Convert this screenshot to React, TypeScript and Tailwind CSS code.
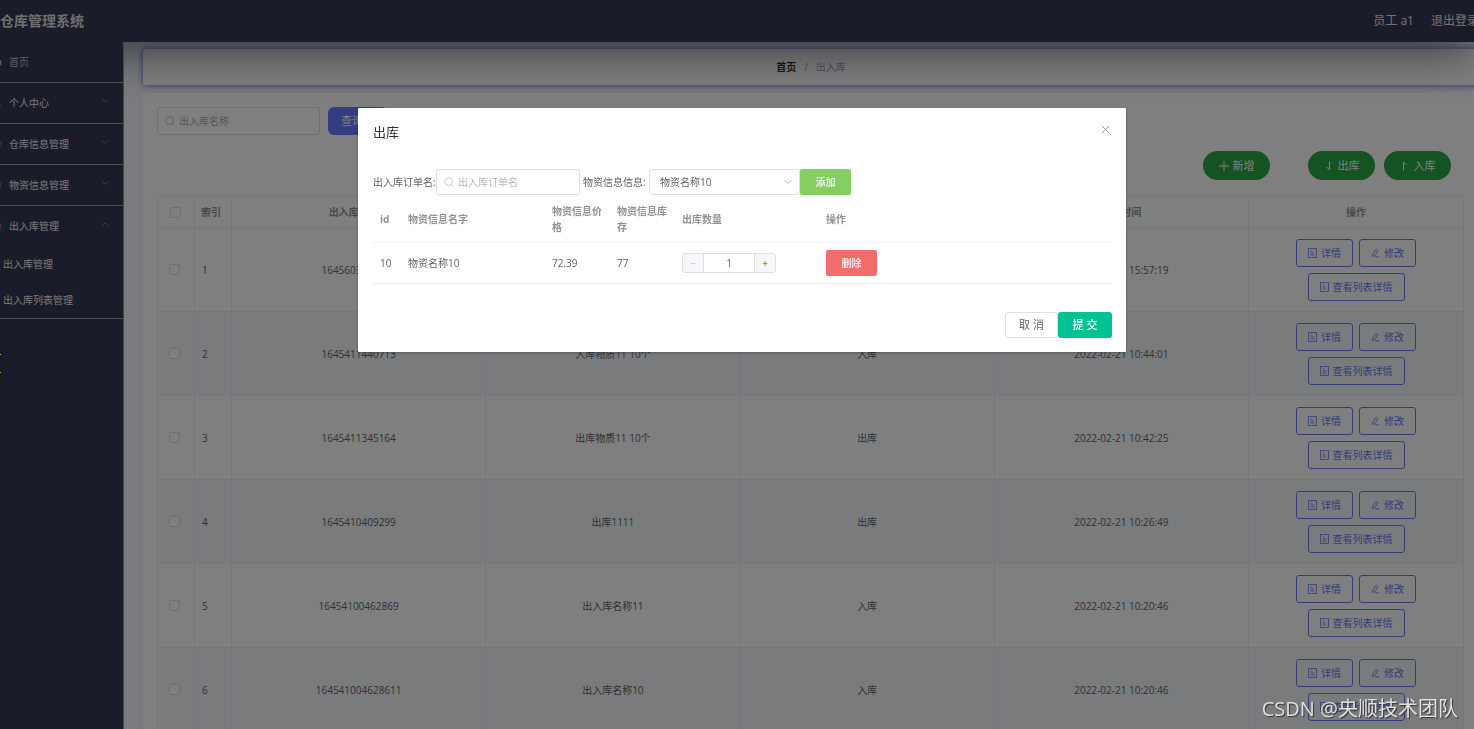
import type { ReactNode } from "react";
import { ChevronDown, ChevronUp, Home, User, Mail, LayoutGrid, FileText } from "lucide-react";

interface StockOrder {
  id: number;
  serial: string;
  name: string;
  type: string;
  time: string;
}

const orders: StockOrder[] = [
  { id: 1, serial: "1645603039271", name: "出库物资10", type: "出库", time: "2022-02-23 15:57:19" },
  { id: 2, serial: "1645411440713", name: "入库物质11 10个", type: "入库", time: "2022-02-21 10:44:01" },
  { id: 3, serial: "1645411345164", name: "出库物质11 10个", type: "出库", time: "2022-02-21 10:42:25" },
  { id: 4, serial: "1645410409299", name: "出库1111", type: "出库", time: "2022-02-21 10:26:49" },
  { id: 5, serial: "16454100462869", name: "出入库名称11", type: "入库", time: "2022-02-21 10:20:46" },
  { id: 6, serial: "164541004628611", name: "出入库名称10", type: "入库", time: "2022-02-21 10:20:46" },
];

const menu = [
  { label: "个人中心", Icon: User },
  { label: "仓库信息管理", Icon: Mail },
  { label: "物资信息管理", Icon: LayoutGrid },
];

function SearchIcon() {
  return (
    <svg viewBox="0 0 12 12" className="size-[10px] shrink-0" fill="none" stroke="currentColor">
      <circle cx="5.5" cy="5.5" r="4.7" />
      <path d="M8.8 9 L11 11.2" />
    </svg>
  );
}

function DocIcon() {
  return (
    <svg viewBox="0 0 9 10" className="h-[10px] w-[9px]" fill="none" stroke="currentColor" strokeWidth="0.8">
      <rect x="0.5" y="0.5" width="8" height="9" />
      <path d="M2.5 3h2M2.5 5h4M2.5 7h4" />
    </svg>
  );
}

function EditIcon() {
  return (
    <svg viewBox="0 0 10 10" className="h-[10px] w-[9px]" fill="none" stroke="currentColor" strokeWidth="0.9">
      <path d="M5.6 0.9 L7.9 2.2 L4.2 8 L1.6 9 L1.9 6.6 Z" />
      <path d="M4.8 9.3h4.4" />
    </svg>
  );
}

function PlusIcon() {
  return (
    <svg viewBox="0 0 10 10" className="size-[10px]" fill="none" stroke="currentColor">
      <path d="M5 0v10M0 5h10" />
    </svg>
  );
}

function OutIcon() {
  return (
    <svg viewBox="0 0 10 10" className="size-[10px]" fill="none" stroke="currentColor">
      <path d="M5.5 0.5v8.5L2.5 6" />
    </svg>
  );
}

function InIcon() {
  return (
    <svg viewBox="0 0 10 10" className="size-[10px]" fill="none" stroke="currentColor">
      <path d="M3.5 9.5V1L6.5 4" />
    </svg>
  );
}

function RoundButton({ icon, children }: { icon: ReactNode; children: ReactNode }) {
  return (
    <button className="flex h-[29px] w-[67px] items-center justify-center gap-1 rounded-full bg-[#28a745] text-[11px] text-white">
      {icon}
      {children}
    </button>
  );
}

function OutlineButton({ icon, children }: { icon: ReactNode; children: ReactNode }) {
  return (
    <button className="flex h-7 items-center gap-1 rounded-[3px] border border-[#6678f5] px-[11px] text-[#6678f5]">
      {icon}
      {children}
    </button>
  );
}

function Checkbox({ label }: { label: string }) {
  return (
    <input
      type="checkbox"
      aria-label={label}
      className="mx-auto block size-[11px] appearance-none rounded-[2px] border border-[#dcdfe6] bg-white"
    />
  );
}

function Sidebar() {
  return (
    <nav className="z-20 w-[124px] shrink-0 overflow-hidden border-r border-[#8c8c94] bg-[#363852] text-[#f0f0f0]">
      <a href="#" className="flex h-[41px] items-center border-b border-[#a4a4ac] text-[#b9b9c0]">
        <Home className="-ml-[6px] mr-[7px] size-2 fill-current" />
        首页
      </a>
      {menu.map(({ label, Icon }) => (
        <a key={label} href="#" className="flex h-[41px] items-center border-b border-[#a4a4ac] pr-[13px]">
          <Icon className="-ml-[6px] mr-[7px] size-2 text-[#909399]" />
          {label}
          <ChevronDown className="mb-1 ml-auto size-[10px] text-[#909399]" strokeWidth={2} />
        </a>
      ))}
      <div className="border-b border-[#a4a4ac]">
        <a href="#" className="flex h-10 items-center pr-[13px]">
          <FileText className="-ml-[6px] mr-[7px] size-2 text-[#909399]" />
          出入库管理
          <ChevronUp className="mb-1 ml-auto size-[10px] text-[#909399]" strokeWidth={2} />
        </a>
        <a href="#" className="flex h-9 items-center pl-[3px]">出入库管理</a>
        <a href="#" className="flex h-9 items-center pl-[3px]">出入库列表管理</a>
      </div>
    </nav>
  );
}

function OrderTable() {
  const cell = "border-b border-r border-[#ebeef5]";
  return (
    <table className="w-full table-fixed border-separate border-spacing-0 border-l border-t border-[#ebeef5] text-center text-[#606266]">
      <colgroup>
        <col className="w-[37px]" />
        <col className="w-[37px]" />
        <col />
        <col />
        <col />
        <col />
        <col className="w-[215px]" />
      </colgroup>
      <thead className="text-[#909399]">
        <tr className="h-[31px]">
          <th className={`${cell} pr-[2px]`}><Checkbox label="全选" /></th>
          <th className={`${cell} pl-[6px] text-left`}>索引</th>
          <th className={cell}>出入库流水号</th>
          <th className={cell}>出入库名称</th>
          <th className={cell}>出入库类型</th>
          <th className={cell}>操作时间</th>
          <th className={cell}>操作</th>
        </tr>
      </thead>
      <tbody>
        {orders.map((order) => (
          <tr key={order.id} className="h-[84px] even:bg-[#f5f7fa]">
            <td className={`${cell} pr-[3px]`}><Checkbox label={order.name} /></td>
            <td className={`${cell} pl-[7px] text-left`}>{order.id}</td>
            <td className={cell}>{order.serial}</td>
            <td className={cell}>{order.name}</td>
            <td className={cell}>{order.type}</td>
            <td className={cell}>{order.time}</td>
            <td className={cell}>
              <div className="flex flex-wrap justify-center gap-[6px] px-10">
                <OutlineButton icon={<DocIcon />}>详情</OutlineButton>
                <OutlineButton icon={<EditIcon />}>修改</OutlineButton>
                <OutlineButton icon={<DocIcon />}>查看列表详情</OutlineButton>
              </div>
            </td>
          </tr>
        ))}
      </tbody>
    </table>
  );
}

function OutboundDialog() {
  return (
    <div className="fixed inset-0 z-40 flex items-start justify-center bg-black/50 pl-[10px] pt-[108px]">
      <div role="dialog" aria-label="出库" className="w-[768px] rounded-[1px] bg-white pb-[14px] pl-[15px] pr-[14px] text-[#606266] shadow-[0_1px_3px_rgba(0,0,0,0.3)]">
        <div className="flex items-start justify-between pb-[26px] pt-[14px]">
          <h2 className="text-[13px] leading-5 text-[#303133]">出库</h2>
          <button aria-label="关闭" className="mr-[2px] mt-[3px] text-[#909399]">
            <svg viewBox="0 0 9 9" className="size-[9px]" fill="none" stroke="currentColor">
              <path d="M1 1l7 7M8 1L1 8" />
            </svg>
          </button>
        </div>

        <div className="flex h-7 items-center">
          <label htmlFor="orderName" className="w-[63px]">出入库订单名:</label>
          <div className="flex h-[26px] w-36 items-center gap-1 rounded-[3px] border border-[#dcdfe6] px-[7px] text-[#c0c4cc]">
            <SearchIcon />
            <input id="orderName" placeholder="出入库订单名" className="w-full min-w-0 outline-none placeholder:text-[#b4b8c0]" />
          </div>
          <label htmlFor="goods" className="ml-[3px] w-[66px]">物资信息信息:</label>
          <div className="relative">
            <select id="goods" className="block h-[26px] w-[151px] appearance-none rounded-[3px] border border-[#dcdfe6] bg-white pl-[10px]">
              <option>物资名称10</option>
            </select>
            <ChevronDown className="pointer-events-none absolute right-[6px] top-[7px] size-3 text-[#b4b8c0]" strokeWidth={2} />
          </div>
          <button className="h-[26px] w-[51px] rounded-[2px] bg-[#85ce61] font-medium text-white">添加</button>
        </div>

        <table className="w-full table-fixed text-left">
          <colgroup>
            <col className="w-7" />
            <col className="w-36" />
            <col className="w-[65px]" />
            <col className="w-[65px]" />
            <col className="w-36" />
            <col />
          </colgroup>
          <thead className="text-[#909399]">
            <tr className="border-b border-[#ebeef5]">
              <th className="p-[7px]">id</th>
              <th className="p-[7px]">物资信息名字</th>
              <th className="p-[7px]">物资信息价格</th>
              <th className="p-[7px]">物资信息库存</th>
              <th className="p-[7px]">出库数量</th>
              <th className="p-[7px]">操作</th>
            </tr>
          </thead>
          <tbody>
            <tr className="border-b border-[#ebeef5]">
              <td className="p-[7px]">10</td>
              <td className="p-[7px]">物资名称10</td>
              <td className="p-[7px]">72.39</td>
              <td className="p-[7px]">77</td>
              <td className="p-[7px]">
                <div className="flex h-5 w-[94px] overflow-hidden rounded-[3px] border border-[#dcdfe6]">
                  <button aria-label="减少" className="w-[21px] border-r border-[#dcdfe6] bg-[#f5f7fa] leading-none text-[#c0c4cc]">−</button>
                  <input aria-label="出库数量" defaultValue="1" className="min-w-0 flex-1 text-center outline-none" />
                  <button aria-label="增加" className="w-[21px] border-l border-[#dcdfe6] bg-[#f5f7fa] leading-none">+</button>
                </div>
              </td>
              <td className="p-[7px]">
                <button className="block h-[26px] w-[51px] rounded-[2px] bg-[#f56c6c] font-medium text-white">删除</button>
              </td>
            </tr>
          </tbody>
        </table>

        <div className="flex justify-end pt-7">
          <button className="h-[26px] w-[53px] rounded-[3px] border border-[#dcdfe6] text-[11px]">取 消</button>
          <button className="h-[26px] w-[54px] rounded-[3px] bg-[#00c292] text-[11px] font-medium text-white">提 交</button>
        </div>
      </div>
    </div>
  );
}

export default function App() {
  return (
    <div className="flex h-screen flex-col overflow-hidden bg-[#f4f7fc] font-['Open_Sans','Noto_Sans_CJK_SC',sans-serif] text-[10px] leading-4">
      <header className="z-10 flex h-[42px] shrink-0 items-center justify-between bg-[#363852] text-[#e6e6e6] shadow-[0_4px_50px_rgba(20,20,40,0.75)]">
        <h1 className="text-[14px] font-bold text-[#dddddd]">仓库管理系统</h1>
        <div className="-mr-[5px] flex gap-[17px] text-[12px]">
          <span>员工 a1</span>
          <a href="#">退出登录</a>
        </div>
      </header>

      <div className="flex min-h-0 flex-1">
        <Sidebar />
        <main className="min-w-0 flex-1 pl-[19px] pt-[7px]">
          <div className="-mr-[5px] flex h-9 items-center justify-center gap-2 rounded-[3px] bg-white shadow-[0_0_6px_#4a5ee0]">
            <a href="#" className="font-bold text-[#303133]">首页</a>
            <span className="text-[#97a0b0]">/</span>
            <span className="text-[#97a0b8]">出入库</span>
          </div>

          <section className="mt-2 bg-white pl-[14px] pr-[10px] pt-[14px]">
            <div className="flex gap-2">
              <div className="flex h-7 w-[163px] items-center gap-1 rounded-[3px] border border-[#dcdfe6] px-[7px] text-[#b0b4bc]">
                <SearchIcon />
                <input aria-label="出入库名称" placeholder="出入库名称" className="w-full min-w-0 outline-none placeholder:text-[#a8acb4]" />
              </div>
              <button className="h-7 w-[60px] rounded-md bg-[#667aff] pr-3 text-[11px] text-white">查询</button>
            </div>
            <div className="mb-4 mr-[13px] mt-4 flex justify-end gap-[9px]">
              <div className="mr-[29px]">
                <RoundButton icon={<PlusIcon />}>新增</RoundButton>
              </div>
              <RoundButton icon={<OutIcon />}>出库</RoundButton>
              <RoundButton icon={<InIcon />}>入库</RoundButton>
            </div>
            <OrderTable />
          </section>
        </main>
      </div>

      <OutboundDialog />

      <div className="fixed left-0 top-[354px] z-50 h-[19px] w-px border-y border-[#f5a623]" />
      <div className="pointer-events-none fixed bottom-[6px] right-4 z-50 text-[20px] leading-7 text-[#e0e0e0] [text-shadow:1px_1px_1px_#333]">
        CSDN @央顺技术团队
      </div>
    </div>
  );
}
